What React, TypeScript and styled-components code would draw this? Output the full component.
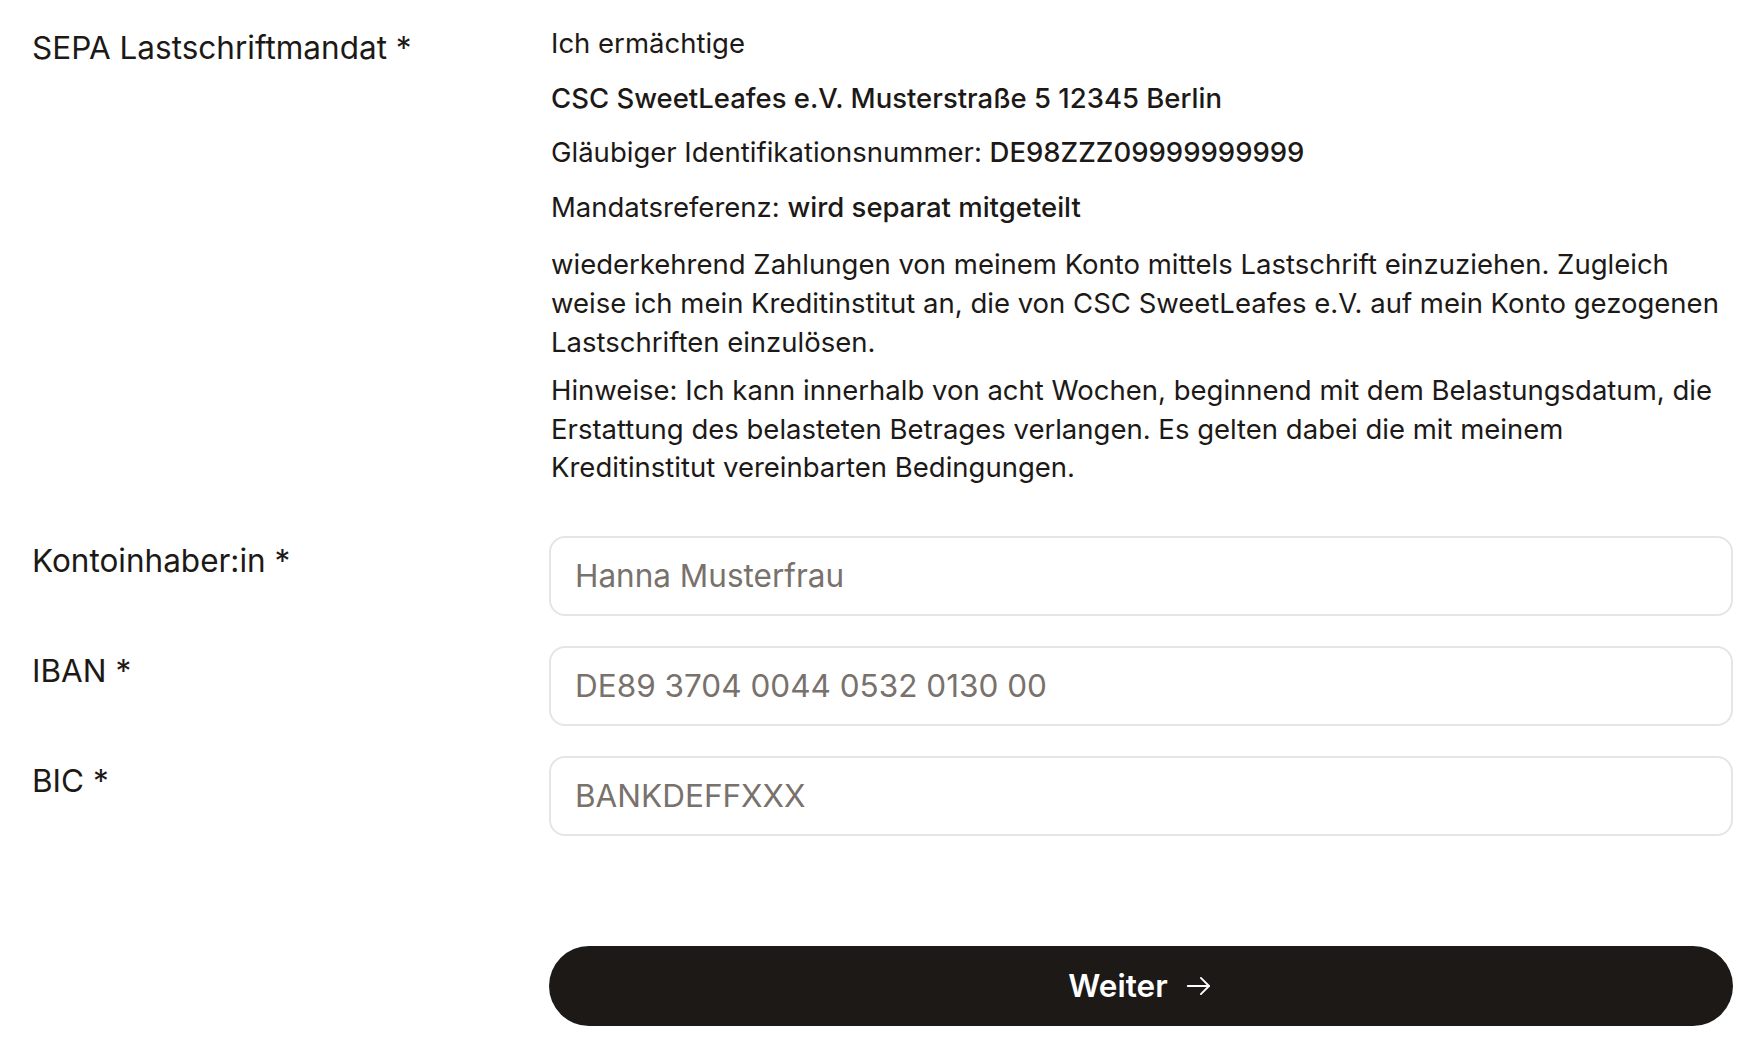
import React from 'react';
import styled, { createGlobalStyle } from 'styled-components';

const GlobalStyle = createGlobalStyle`
  html, body {
    margin: 0;
    padding: 0;
    background: #fff;
  }
  body {
    font-family: Inter, "Liberation Sans", sans-serif;
    color: #1c1917;
  }
`;

interface FieldDef {
  label: string;
  placeholder: string;
}

const FIELDS: FieldDef[] = [
  { label: 'Kontoinhaber:in *', placeholder: 'Hanna Musterfrau' },
  { label: 'IBAN *', placeholder: 'DE89 3704 0044 0532 0130 00' },
  { label: 'BIC *', placeholder: 'BANKDEFFXXX' },
];

const ArrowRight = () => (
  <svg width="30" height="30" viewBox="0 0 24 24" fill="none" stroke="currentColor" strokeWidth="1.5" strokeLinecap="round" strokeLinejoin="round">
    <path d="M3 12h17" />
    <path d="M13.5 5.5L20 12l-6.5 6.5" />
  </svg>
);

export default function App() {
  return (
    <>
      <GlobalStyle />
      <Form>
        <Row>
          <Label>SEPA Lastschriftmandat *</Label>
          <Mandate>
            <Line>Ich ermächtige</Line>
            <Line><Strong>CSC SweetLeafes e.V. Musterstraße 5 12345 Berlin</Strong></Line>
            <Line>Gläubiger Identifikationsnummer: <Strong>DE98ZZZ09999999999</Strong></Line>
            <Line>Mandatsreferenz: <Strong>wird separat mitgeteilt</Strong></Line>
            <Paragraph>
              wiederkehrend Zahlungen von meinem Konto mittels Lastschrift einzuziehen. Zugleich
              weise ich mein Kreditinstitut an, die von CSC SweetLeafes e.V. auf mein Konto gezogenen
              Lastschriften einzulösen.
            </Paragraph>
            <Note>
              Hinweise: Ich kann innerhalb von acht Wochen, beginnend mit dem Belastungsdatum, die
              Erstattung des belasteten Betrages verlangen. Es gelten dabei die mit meinem
              Kreditinstitut vereinbarten Bedingungen.
            </Note>
          </Mandate>
        </Row>
        {FIELDS.map(field => (
          <Row key={field.label}>
            <Label $offset={1}>{field.label}</Label>
            <Input placeholder={field.placeholder} />
          </Row>
        ))}
        <Actions>
          <SubmitButton type="button">
            Weiter
            <ArrowRight />
          </SubmitButton>
        </Actions>
      </Form>
    </>
  );
}

const Form = styled.form`
  display: flex;
  flex-direction: column;
  gap: 30px;
  padding: 24px 25px 32px 32px;
`;

const Row = styled.div`
  display: grid;
  grid-template-columns: 517px 1fr;
  align-items: start;
`;

const Label = styled.div<{ $offset?: number }>`
  padding-top: ${props => props.$offset || 0}px;
  font-size: 31.5px;
  line-height: 48px;
  font-weight: 400;
  color: #1c1917;
`;

const Mandate = styled.div`
  display: flex;
  flex-direction: column;
  gap: 16px;
  padding: 0 0 19px 2px;
  font-size: 27.5px;
  line-height: 38.6px;
`;

const Line = styled.div``;

const Strong = styled.span`
  font-weight: 500;
`;

const Paragraph = styled.p`
  margin: 3px 0 0;
`;

const Note = styled.p`
  margin: -6px 0 0;
`;

const Input = styled.input`
  box-sizing: border-box;
  width: 100%;
  height: 80px;
  padding: 0 24px;
  border: 2px solid #e7e5e4;
  border-radius: 16px;
  font-family: inherit;
  font-size: 31.5px;
  color: #1c1917;
  background: #fff;
  outline: none;

  &::placeholder {
    color: #78716c;
  }
`;

const Actions = styled.div`
  display: grid;
  grid-template-columns: 517px 1fr;
  margin-top: 80px;

  & > * {
    grid-column: 2;
  }
`;

const SubmitButton = styled.button`
  display: flex;
  align-items: center;
  justify-content: center;
  gap: 16px;
  height: 80px;
  border: none;
  border-radius: 999px;
  background: #1c1917;
  color: #fff;
  font-family: inherit;
  font-size: 31.5px;
  font-weight: 600;
  cursor: pointer;
`;
